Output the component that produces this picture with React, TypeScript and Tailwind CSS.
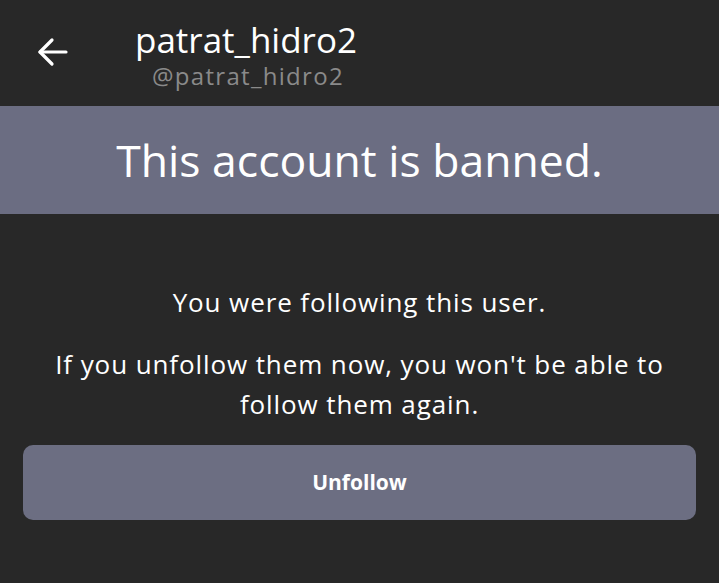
import React from "react";

export default function App() {
  return (
    <div
      className="w-[719px] h-[583px] bg-[#282828] text-white overflow-hidden"
      style={{ fontFamily: "'Open Sans', 'Noto Sans', sans-serif" }}
    >
      <div className="h-[106px] flex items-start">
        <div className="w-[135px] pt-[36px] pl-[37px]">
          <svg width="32" height="32" viewBox="0 0 32 32" fill="none" stroke="white" strokeWidth="3.2" strokeLinecap="round" strokeLinejoin="round">
            <path d="M29 16H3" />
            <path d="M15 4L3 16l12 12" />
          </svg>
        </div>
        <div className="flex flex-col pt-[20px]">
          <div className="text-[35px] leading-[40px]">patrat_hidro2</div>
          <div className="mt-[2px] text-[24px] leading-[28px] tracking-[1.3px] text-[#8a8a8a] pl-[17px]">@patrat_hidro2</div>
        </div>
      </div>
      <div className="h-[108px] bg-[#6b6d82] flex items-center justify-center">
        <div className="text-[44.5px] leading-none">This account is banned.</div>
      </div>
      <div className="flex flex-col items-center text-center text-[26px] tracking-[0.9px] leading-[40px] pt-[68px]">
        <p>You were following this user.</p>
        <p className="mt-[22px] w-[660px]">
          If you unfollow them now, you won't be able to follow them again.
        </p>
      </div>
      <div className="px-[23px] pt-[21px]">
        <button className="w-full h-[75px] rounded-[10px] bg-[#6c6e82] text-[21px] font-bold flex items-center justify-center">
          Unfollow
        </button>
      </div>
    </div>
  );
}
